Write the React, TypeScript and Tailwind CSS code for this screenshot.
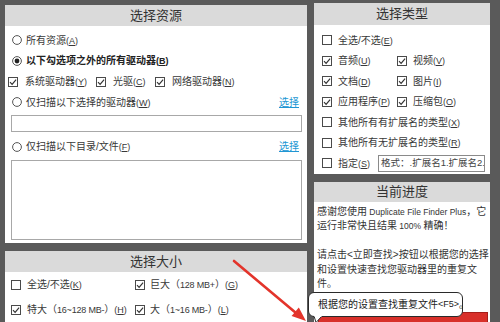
import React from "react";

function Check({ on }: { on?: boolean }) {
  return (
    <svg width="10" height="10" viewBox="0 0 10 10" className="shrink-0">
      <rect x="0.5" y="0.5" width="9" height="9" fill="white" stroke="#4a4a4a" />
      {on && <path d="M2 5.2 L4.1 7.3 L8.1 2.6" fill="none" stroke="#333" strokeWidth="1.2" />}
    </svg>
  );
}

function Radio({ on }: { on?: boolean }) {
  return (
    <svg width="10" height="10" viewBox="0 0 10 10" className="shrink-0">
      <circle cx="5" cy="5" r="4.4" fill="white" stroke="#555" />
      {on && <circle cx="5" cy="5" r="2.4" fill="#222" />}
    </svg>
  );
}

function Key({ k }: { k: string }) {
  return (
    <span className="text-[9px]">
      (<span className="underline">{k}</span>)
    </span>
  );
}

function Header({ children, h }: { children: React.ReactNode; h: string }) {
  return (
    <div className={`${h} bg-[#dadada] flex items-center justify-center text-[13px] text-[#333]`}>{children}</div>
  );
}

function Box({ on, label, k, gap = "gap-[7px]" }: { on?: boolean; label: React.ReactNode; k: string; gap?: string }) {
  return (
    <span className={`flex items-center ${gap} whitespace-nowrap`}>
      <Check on={on} />
      <span>
        {label}
        <Key k={k} />
      </span>
    </span>
  );
}

function Link() {
  return <span className="text-[#2196d3] underline text-[10px]">选择</span>;
}

// small latin run inside CJK labels
function Lat({ children }: { children: React.ReactNode }) {
  return <span className="text-[9px] tracking-[-0.2px]">{children}</span>;
}

export default function App() {
  return (
    <div className="relative w-[500px] h-[322px] overflow-hidden bg-[#5a5a5a] flex gap-[7px] pl-[5px] text-[10px] text-[#383838] font-['Liberation_Sans','Noto_Sans_CJK_SC',sans-serif]">
      {/* left column */}
      <div className="w-[302px] flex flex-col gap-[8px] pt-[5px]">
        <section className="bg-white h-[242px] flex flex-col">
          <Header h="h-[21px]">选择资源</Header>
          <div className="pt-[4px] flex flex-col">
            <div className="h-[20.7px] flex items-center gap-[4px] pl-[7px]">
              <Radio />
              <span>所有资源<Key k="A" /></span>
            </div>
            <div className="h-[20.7px] flex items-center gap-[4px] pl-[7px] font-bold text-[#222]">
              <Radio on />
              <span>以下勾选项之外的所有驱动器<Key k="B" /></span>
            </div>
            <div className="h-[20.7px] flex items-center pl-[3px]">
              <div className="w-[88px]"><Box on label="系统驱动器" k="Y" /></div>
              <div className="w-[59px]"><Box on label="光驱" k="C" /></div>
              <Box on label="网络驱动器" k="N" />
            </div>
            <div className="h-[20.7px] flex items-center justify-between pl-[7px] pr-[8px]">
              <span className="flex items-center gap-[4px]">
                <Radio />
                <span>仅扫描以下选择的驱动器<Key k="W" /></span>
              </span>
              <Link />
            </div>
            <div className="mt-[2px] ml-[6px] mr-[5px] h-[17px] border border-[#a8a8a8]" />
            <div className="mt-[5px] h-[20px] flex items-center justify-between pl-[7px] pr-[8px]">
              <span className="flex items-center gap-[4px]">
                <Radio />
                <span>仅扫描以下目录/文件<Key k="F" /></span>
              </span>
              <Link />
            </div>
            <div className="mt-[3px] ml-[6px] mr-[5px] h-[80px] border border-[#a8a8a8]" />
          </div>
        </section>
        <section className="bg-white flex-1 flex flex-col">
          <Header h="h-[21px]">选择大小</Header>
          <div className="flex flex-col pl-[6px]">
            <div className="h-[25px] flex items-center">
              <div className="w-[124px]"><Box label="全选/不选" k="K" gap="gap-[6px]" /></div>
              <Box on label={<>巨大（<Lat>128 MB+</Lat>）</>} k="G" gap="gap-[5px]" />
            </div>
            <div className="h-[25px] flex items-center">
              <div className="w-[124px]"><Box on label={<>特大（<Lat>16~128 MB-</Lat>）</>} k="H" gap="gap-[6px]" /></div>
              <Box on label={<>大（<Lat>1~16 MB-</Lat>）</>} k="L" gap="gap-[5px]" />
            </div>
          </div>
        </section>
      </div>

      {/* right column */}
      <div className="w-[176px] flex flex-col gap-[8px] pt-[3px]">
        <section className="bg-white h-[177px] flex flex-col">
          <Header h="h-[22px]">选择类型</Header>
          <div className="pt-[5px] pl-[8px] flex flex-col">
            <div className="h-[20.5px] flex items-center"><Box label="全选/不选" k="E" gap="gap-[6px]" /></div>
            <div className="h-[20.5px] flex items-center">
              <div className="w-[75px]"><Box on label="音频" k="U" gap="gap-[6px]" /></div>
              <Box on label="视频" k="V" gap="gap-[6px]" />
            </div>
            <div className="h-[20.5px] flex items-center">
              <div className="w-[75px]"><Box on label="文档" k="D" gap="gap-[6px]" /></div>
              <Box on label="图片" k="I" gap="gap-[6px]" />
            </div>
            <div className="h-[20.5px] flex items-center">
              <div className="w-[75px]"><Box on label="应用程序" k="P" gap="gap-[6px]" /></div>
              <Box on label="压缩包" k="O" gap="gap-[6px]" />
            </div>
            <div className="h-[20.5px] flex items-center"><Box label="其他所有有扩展名的类型" k="X" gap="gap-[6px]" /></div>
            <div className="h-[20.5px] flex items-center"><Box label="其他所有无扩展名的类型" k="R" gap="gap-[6px]" /></div>
            <div className="h-[20.5px] flex items-center">
              <div className="w-[56px]"><Box label="指定" k="S" gap="gap-[6px]" /></div>
              <div className="w-[107px] h-[17px] border border-[#8a8a8a] pl-[2px] flex items-center overflow-hidden whitespace-nowrap text-[9.5px] text-[#444]">
                格式：.扩展名1.扩展名2.
              </div>
            </div>
          </div>
        </section>
        <section className="bg-white flex-1 flex flex-col">
          <Header h="h-[20px]">当前进度</Header>
          <div className="pt-[3px] pl-[3px] leading-[14.5px] whitespace-nowrap text-[#333]">
            感谢您使用<span className="text-[8.5px]"> Duplicate File Finder Plus</span>，它
            <br />
            运行非常快且结果<span className="text-[8.5px]"> 100% </span>精确！
            <br />
            <br />
            请点击&lt;立即查找&gt;按钮以根据您的选择
            <br />
            和设置快速查找您驱动器里的重复文
            <br />
            件。
          </div>
          <div className="mt-[20px] ml-[4px] mr-[2px] h-[30px] bg-[#d8302a] border border-[#a51f1a]" />
        </section>
      </div>

      {/* tooltip */}
      <div className="absolute left-[308px] top-[292px] w-[155px] h-[25px] rounded-[6px] border border-[#2a2a2a] bg-white flex items-center pl-[9px] text-[10px] text-[#222] whitespace-nowrap">
        根据您的设置查找重复文件<span className="text-[9px]">&lt;F5&gt;</span>。
      </div>
      <svg className="absolute left-[313px] top-[316px] pointer-events-none" width="12" height="7" viewBox="0 0 12 7">
        <path d="M1 0 L3 6.5 L9 0" fill="white" stroke="#2a2a2a" strokeWidth="1" />
        <rect x="1.5" y="0" width="7" height="1" fill="white" />
      </svg>

      {/* red arrow */}
      <svg className="absolute inset-0 pointer-events-none" width="500" height="322" viewBox="0 0 500 322">
        <line x1="234" y1="261" x2="296" y2="313" stroke="#e3342b" strokeWidth="2.6" strokeLinecap="round" />
        <path d="M306 321 L291.6 316 L298.8 307.4 Z" fill="#e3342b" />
      </svg>
    </div>
  );
}
